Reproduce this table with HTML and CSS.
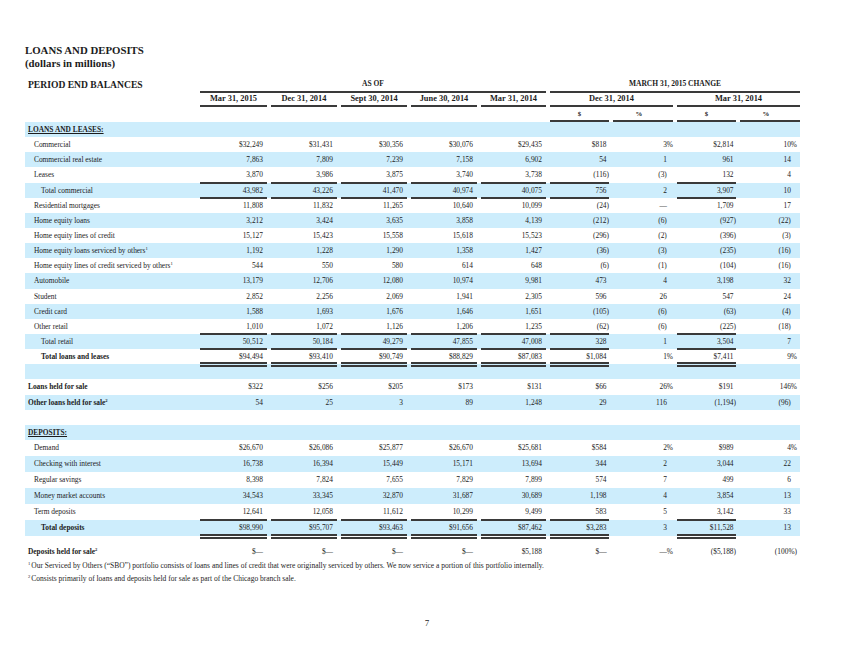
FILE: index.html
```html
<!DOCTYPE html>
<html lang="en">
<head>
  <meta charset="UTF-8" />
  <title>Loans and Deposits</title>
  <link rel="stylesheet" href="styles.css">
</head>
<body>
  <div class="page">
    <h1 class="title">LOANS AND DEPOSITS<br>(dollars in millions)</h1>

    <div class="sheet">
      <div class="row head hr1">
        <span class="lbl period">PERIOD END BALANCES</span>
        <span class="grp asof">AS OF</span>
        <span class="grp chg">MARCH 31, 2015 CHANGE</span>
      </div>
      <div class="row head hr2">
        <span></span>
        <span class="dt">Mar 31, 2015</span>
        <span class="dt">Dec 31, 2014</span>
        <span class="dt">Sept 30, 2014</span>
        <span class="dt">June 30, 2014</span>
        <span class="dt">Mar 31, 2014</span>
        <span class="dt pair">Dec 31, 2014</span>
        <span class="dt pair">Mar 31, 2014</span>
      </div>
      <div class="row head hr3">
        <span class="sub first">$</span>
        <span class="sub pc">%</span>
        <span class="sub">$</span>
        <span class="sub pc">%</span>
      </div>

      <!-- loans -->
      <div class="row b"><span class="lbl l0 hd">LOANS AND LEASES:</span></div>
      <div class="row">
        <span class="lbl l1">Commercial</span>
        <span class="n">$32,249</span><span class="n">$31,431</span><span class="n">$30,356</span><span class="n">$30,076</span><span class="n">$29,435</span>
        <span class="n">$818<i class="sp">)</i></span><span class="n p">3%</span><span class="n">$2,814<i class="sp">)</i></span><span class="n p">10%</span>
      </div>
      <div class="row b">
        <span class="lbl l1">Commercial real estate</span>
        <span class="n">7,863</span><span class="n">7,809</span><span class="n">7,239</span><span class="n">7,158</span><span class="n">6,902</span>
        <span class="n">54<i class="sp">)</i></span><span class="n p">1<i class="sp">%</i></span><span class="n">961<i class="sp">)</i></span><span class="n p">14<i class="sp">%</i></span>
      </div>
      <div class="row">
        <span class="lbl l1">Leases</span>
        <span class="n">3,870</span><span class="n">3,986</span><span class="n">3,875</span><span class="n">3,740</span><span class="n">3,738</span>
        <span class="n">(116)</span><span class="n p">(3)<i class="sp">%</i></span><span class="n">132<i class="sp">)</i></span><span class="n p">4<i class="sp">%</i></span>
      </div>
      <div class="row b rt rb">
        <span class="lbl l2">Total commercial</span>
        <span class="n">43,982</span><span class="n">43,226</span><span class="n">41,470</span><span class="n">40,974</span><span class="n">40,075</span>
        <span class="n">756<i class="sp">)</i></span><span class="n p">2<i class="sp">%</i></span><span class="n">3,907<i class="sp">)</i></span><span class="n p">10<i class="sp">%</i></span>
      </div>
      <div class="row">
        <span class="lbl l1">Residential mortgages</span>
        <span class="n">11,808</span><span class="n">11,832</span><span class="n">11,265</span><span class="n">10,640</span><span class="n">10,099</span>
        <span class="n">(24)</span><span class="n p">—<i class="sp">%</i></span><span class="n">1,709<i class="sp">)</i></span><span class="n p">17<i class="sp">%</i></span>
      </div>
      <div class="row b">
        <span class="lbl l1">Home equity loans</span>
        <span class="n">3,212</span><span class="n">3,424</span><span class="n">3,635</span><span class="n">3,858</span><span class="n">4,139</span>
        <span class="n">(212)</span><span class="n p">(6)<i class="sp">%</i></span><span class="n">(927)</span><span class="n p">(22)<i class="sp">%</i></span>
      </div>
      <div class="row">
        <span class="lbl l1">Home equity lines of credit</span>
        <span class="n">15,127</span><span class="n">15,423</span><span class="n">15,558</span><span class="n">15,618</span><span class="n">15,523</span>
        <span class="n">(296)</span><span class="n p">(2)<i class="sp">%</i></span><span class="n">(396)</span><span class="n p">(3)<i class="sp">%</i></span>
      </div>
      <div class="row b">
        <span class="lbl l1">Home equity loans serviced by others<sup>1</sup></span>
        <span class="n">1,192</span><span class="n">1,228</span><span class="n">1,290</span><span class="n">1,358</span><span class="n">1,427</span>
        <span class="n">(36)</span><span class="n p">(3)<i class="sp">%</i></span><span class="n">(235)</span><span class="n p">(16)<i class="sp">%</i></span>
      </div>
      <div class="row">
        <span class="lbl l1">Home equity lines of credit serviced by others<sup>1</sup></span>
        <span class="n">544</span><span class="n">550</span><span class="n">580</span><span class="n">614</span><span class="n">648</span>
        <span class="n">(6)</span><span class="n p">(1)<i class="sp">%</i></span><span class="n">(104)</span><span class="n p">(16)<i class="sp">%</i></span>
      </div>
      <div class="row b">
        <span class="lbl l1">Automobile</span>
        <span class="n">13,179</span><span class="n">12,706</span><span class="n">12,080</span><span class="n">10,974</span><span class="n">9,981</span>
        <span class="n">473<i class="sp">)</i></span><span class="n p">4<i class="sp">%</i></span><span class="n">3,198<i class="sp">)</i></span><span class="n p">32<i class="sp">%</i></span>
      </div>
      <div class="row">
        <span class="lbl l1">Student</span>
        <span class="n">2,852</span><span class="n">2,256</span><span class="n">2,069</span><span class="n">1,941</span><span class="n">2,305</span>
        <span class="n">596<i class="sp">)</i></span><span class="n p">26<i class="sp">%</i></span><span class="n">547<i class="sp">)</i></span><span class="n p">24<i class="sp">%</i></span>
      </div>
      <div class="row b">
        <span class="lbl l1">Credit card</span>
        <span class="n">1,588</span><span class="n">1,693</span><span class="n">1,676</span><span class="n">1,646</span><span class="n">1,651</span>
        <span class="n">(105)</span><span class="n p">(6)<i class="sp">%</i></span><span class="n">(63)</span><span class="n p">(4)<i class="sp">%</i></span>
      </div>
      <div class="row">
        <span class="lbl l1">Other retail</span>
        <span class="n">1,010</span><span class="n">1,072</span><span class="n">1,126</span><span class="n">1,206</span><span class="n">1,235</span>
        <span class="n">(62)</span><span class="n p">(6)<i class="sp">%</i></span><span class="n">(225)</span><span class="n p">(18)<i class="sp">%</i></span>
      </div>
      <div class="row b rt rb">
        <span class="lbl l2">Total retail</span>
        <span class="n">50,512</span><span class="n">50,184</span><span class="n">49,279</span><span class="n">47,855</span><span class="n">47,008</span>
        <span class="n">328<i class="sp">)</i></span><span class="n p">1<i class="sp">%</i></span><span class="n">3,504<i class="sp">)</i></span><span class="n p">7<i class="sp">%</i></span>
      </div>
      <div class="row rd">
        <span class="lbl l2 bold">Total loans and leases</span>
        <span class="n">$94,494</span><span class="n">$93,410</span><span class="n">$90,749</span><span class="n">$88,829</span><span class="n">$87,083</span>
        <span class="n">$1,084<i class="sp">)</i></span><span class="n p">1%</span><span class="n">$7,411<i class="sp">)</i></span><span class="n p">9%</span>
      </div>
      <div class="row b"></div>
      <div class="row">
        <span class="lbl l0 bold">Loans held for sale</span>
        <span class="n">$322</span><span class="n">$256</span><span class="n">$205</span><span class="n">$173</span><span class="n">$131</span>
        <span class="n">$66<i class="sp">)</i></span><span class="n p">26%</span><span class="n">$191<i class="sp">)</i></span><span class="n p">146%</span>
      </div>
      <div class="row b">
        <span class="lbl l0 bold">Other loans held for sale<sup>2</sup></span>
        <span class="n">54</span><span class="n">25</span><span class="n">3</span><span class="n">89</span><span class="n">1,248</span>
        <span class="n">29<i class="sp">)</i></span><span class="n p">116<i class="sp">%</i></span><span class="n">(1,194)</span><span class="n p">(96)<i class="sp">%</i></span>
      </div>
      <div class="row"></div>

      <!-- deposits -->
      <div class="row b"><span class="lbl l0 hd">DEPOSITS:</span></div>
      <div class="row dep">
        <span class="lbl l1">Demand</span>
        <span class="n">$26,670</span><span class="n">$26,086</span><span class="n">$25,877</span><span class="n">$26,670</span><span class="n">$25,681</span>
        <span class="n">$584<i class="sp">)</i></span><span class="n p">2%</span><span class="n">$989<i class="sp">)</i></span><span class="n p">4%</span>
      </div>
      <div class="row dep b">
        <span class="lbl l1">Checking with interest</span>
        <span class="n">16,738</span><span class="n">16,394</span><span class="n">15,449</span><span class="n">15,171</span><span class="n">13,694</span>
        <span class="n">344<i class="sp">)</i></span><span class="n p">2<i class="sp">%</i></span><span class="n">3,044<i class="sp">)</i></span><span class="n p">22<i class="sp">%</i></span>
      </div>
      <div class="row dep">
        <span class="lbl l1">Regular savings</span>
        <span class="n">8,398</span><span class="n">7,824</span><span class="n">7,655</span><span class="n">7,829</span><span class="n">7,899</span>
        <span class="n">574<i class="sp">)</i></span><span class="n p">7<i class="sp">%</i></span><span class="n">499<i class="sp">)</i></span><span class="n p">6<i class="sp">%</i></span>
      </div>
      <div class="row dep b">
        <span class="lbl l1">Money market accounts</span>
        <span class="n">34,543</span><span class="n">33,345</span><span class="n">32,870</span><span class="n">31,687</span><span class="n">30,689</span>
        <span class="n">1,198<i class="sp">)</i></span><span class="n p">4<i class="sp">%</i></span><span class="n">3,854<i class="sp">)</i></span><span class="n p">13<i class="sp">%</i></span>
      </div>
      <div class="row dep">
        <span class="lbl l1">Term deposits</span>
        <span class="n">12,641</span><span class="n">12,058</span><span class="n">11,612</span><span class="n">10,299</span><span class="n">9,499</span>
        <span class="n">583<i class="sp">)</i></span><span class="n p">5<i class="sp">%</i></span><span class="n">3,142<i class="sp">)</i></span><span class="n p">33<i class="sp">%</i></span>
      </div>
      <div class="row dep b rt rd">
        <span class="lbl l2 bold">Total deposits</span>
        <span class="n">$98,990</span><span class="n">$95,707</span><span class="n">$93,463</span><span class="n">$91,656</span><span class="n">$87,462</span>
        <span class="n">$3,283<i class="sp">)</i></span><span class="n p">3<i class="sp">%</i></span><span class="n">$11,528<i class="sp">)</i></span><span class="n p">13<i class="sp">%</i></span>
      </div>

      <div class="row held">
        <span class="lbl l0 bold">Deposits held for sale<sup>2</sup></span>
        <span class="n">$—</span><span class="n">$—</span><span class="n">$—</span><span class="n">$—</span><span class="n">$5,188</span>
        <span class="n">$—<i class="sp">)</i></span><span class="n p">—%</span><span class="n">($5,188)</span><span class="n p">(100%)</span>
      </div>
    </div>

    <div class="notes">
      <p><sup>1</sup>Our Serviced by Others (“SBO”) portfolio consists of loans and lines of credit that were originally serviced by others. We now service a portion of this portfolio internally.</p>
      <p><sup>2</sup>Consists primarily of loans and deposits held for sale as part of the Chicago branch sale.</p>
    </div>
  </div>

  <div class="pageno">7</div>
</body>
</html>
```

FILE: styles.css
```css
:root {
  --band: #cdedfc;
  --rule: #3a3a3a;
  --ink: #1c1c1c;
}

html, body {
  margin: 0;
  padding: 0;
  background: #fff;
  color: var(--ink);
  font-family: "Liberation Serif", "Times New Roman", serif;
}

.page {
  padding: 44px 0 0 25px;
  width: 775px;
}

.title {
  margin: 0;
  font-size: 10.8px;
  line-height: 13px;
  font-weight: bold;
}

.sheet {
  margin-top: 7px;
}

.row {
  display: grid;
  grid-template-columns: 171px 67px 66px 66px 66px 65px 59px 60px 59px 60px;
  column-gap: 4px;
  height: 15.15px;
  font-size: 7.4px;
  line-height: 15.15px;
}

.row.b {
  background: var(--band);
}

.row.dep {
  height: 16px;
  line-height: 16px;
}

.row.held {
  height: 15px;
  line-height: 15px;
  margin-top: 8px;
}

/* header rows */
.head {
  font-weight: bold;
  line-height: 1;
}

.head span {
  display: flex;
  align-items: center;
  justify-content: center;
  box-sizing: border-box;
}

.hr1 {
  height: 16px;
}

.hr2 {
  height: 14px;
  font-size: 8.4px;
}

.hr3 {
  height: 15px;
  font-size: 6.8px;
}

.period {
  font-size: 9.6px;
  justify-content: flex-start !important;
  padding-left: 3px;
}

.grp {
  font-size: 7.5px;
  border-bottom: 2px solid var(--rule);
}

.asof {
  grid-column: 2 / span 5;
}

.chg {
  grid-column: 7 / span 4;
}

.dt {
  border-bottom: 2px solid var(--rule);
}

.dt.pair {
  grid-column: span 2;
}

.sub {
  border-bottom: 2px solid var(--rule);
  padding-top: 2px;
}

.sub.first {
  grid-column-start: 7;
}

.sub.pc {
  padding-right: 8px;
}

/* body cells */
.lbl {
  white-space: nowrap;
}

.l0 { padding-left: 3px; }
.l1 { padding-left: 9px; }
.l2 { padding-left: 16px; }

.bold, .hd {
  font-weight: bold;
}

.hd {
  text-decoration: underline;
}

.n {
  position: relative;
  text-align: right;
  padding-right: 4px;
  white-space: nowrap;
}

.row > .n:nth-child(7),
.row > .n:nth-child(8),
.row > .n:nth-child(9) {
  padding-right: 0;
}

.row > .n:nth-child(10) {
  padding-right: 3px;
}

.sp {
  visibility: hidden;
  font-style: normal;
}

sup {
  font-size: 4.6px;
  line-height: 0;
  vertical-align: 3px;
}

/* total rules */
.rt > .n:not(.p)::before,
.rb > .n:not(.p)::after,
.rd > .n:not(.p)::after {
  content: "";
  position: absolute;
  left: 0;
  right: 0;
}

.rt > .n:not(.p)::before {
  top: -1px;
  height: 2px;
  background: var(--rule);
}

.rb > .n:not(.p)::after {
  bottom: -1px;
  height: 2px;
  background: var(--rule);
}

.rd > .n:not(.p)::after {
  bottom: -3px;
  height: 1px;
  border-top: 2px solid var(--rule);
  border-bottom: 2px solid var(--rule);
}

.notes {
  font-size: 7.5px;
  line-height: 13.3px;
}

.notes p {
  margin: 0;
  padding-left: 3px;
}

.notes sup {
  margin-right: 1px;
}

.pageno {
  text-align: center;
  font-size: 9px;
  line-height: 12px;
  margin-top: 31px;
}
```
